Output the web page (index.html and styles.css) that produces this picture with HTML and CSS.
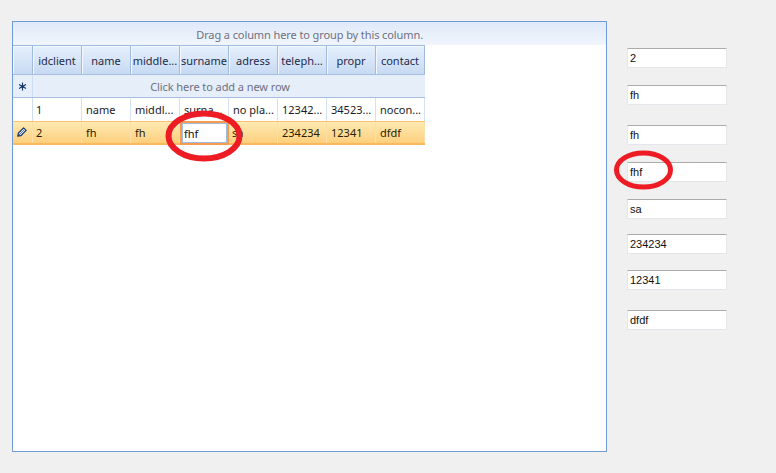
FILE: index.html
```html
<!DOCTYPE html>
<html lang="en">
<head>
<meta charset="utf-8">
<title>Clients</title>
<link rel="stylesheet" href="styles.css">
</head>
<body>
<main class="page">
  <section class="grid">
    <div class="group-panel">Drag a column here to group by this column.</div>
    <div class="row header">
      <div class="ind"></div>
      <div class="cell">idclient</div><div class="cell">name</div><div class="cell">middle...</div><div class="cell">surname</div>
      <div class="cell">adress</div><div class="cell">teleph...</div><div class="cell">propr</div><div class="cell">contact</div>
    </div>
    <div class="row new-row">
      <div class="ind">
        <svg class="icon" width="9" height="9" viewBox="0 0 9 9"><circle cx="4.5" cy="4.5" r="1.6" fill="#14366e"/><path d="M4.5 0.5v8M1 2.5l7 4M8 2.5l-7 4" stroke="#14366e" stroke-width="1.1" fill="none"/></svg>
      </div>
      <div class="new-text">Click here to add a new row</div>
    </div>
    <div class="row data">
      <div class="ind"></div>
      <div class="cell">1</div><div class="cell">name</div><div class="cell">middl...</div><div class="cell">surna...</div>
      <div class="cell">no pla...</div><div class="cell">12342...</div><div class="cell">34523...</div><div class="cell">nocon...</div>
    </div>
    <div class="row data focused">
      <div class="ind">
        <svg class="icon pencil" width="10" height="10" viewBox="0 0 10 10"><path d="M.8 9.2l.7-3.2L6.6.9l2.5 2.5L4 8.5z" fill="#eef4fc" stroke="#1a3a70" stroke-width="1.3" stroke-linejoin="round"/><path d="M2 8l5.5-5.5" stroke="#4f7fc0" stroke-width="1"/></svg>
      </div>
      <div class="cell">2</div><div class="cell">fh</div><div class="cell">fh</div><div class="cell editor"><span class="editor-box">fhf</span></div>
      <div class="cell sa">sa</div><div class="cell">234234</div><div class="cell">12341</div><div class="cell">dfdf</div>
    </div>
  </section>
  <aside class="fields">
    <div class="box gap-a">2</div>
    <div class="box gap-b">fh</div>
    <div class="box gap-c">fh</div>
    <div class="box gap-b">fhf</div>
    <div class="box gap-b">sa</div>
    <div class="box gap-e">234234</div>
    <div class="box gap-d">12341</div>
    <div class="box gap-c">dfdf</div>
  </aside>
  <svg class="mark mark-grid" width="78" height="52" viewBox="0 0 78 52"><ellipse cx="39" cy="26" rx="35.5" ry="22.5" fill="none" stroke="#ed1c24" stroke-width="6"/></svg>
  <svg class="mark mark-field" width="62" height="40" viewBox="0 0 62 40"><ellipse cx="30.5" cy="20" rx="27" ry="17" fill="none" stroke="#ed1c24" stroke-width="5"/></svg>
</main>
</body>
</html>
```
FILE: styles.css
```css
* { box-sizing: border-box; }
html, body { margin: 0; height: 100%; }
body { background: #f0f0f0; overflow: hidden; }
.page {
  position: relative;
  width: 776px;
  height: 473px;
  display: flex;
  align-items: flex-start;
  padding: 21px 0 0 12px;
  font: 11px "Noto Sans", "Liberation Sans", sans-serif;
}
.grid {
  width: 595px;
  height: 431px;
  background: #fff;
  border: 1px solid #6f9cd9;
  display: flex;
  flex-direction: column;
}
.group-panel {
  height: 23px;
  display: flex;
  align-items: center;
  justify-content: flex-end;
  padding-right: 183px;
  padding-top: 1px;
  letter-spacing: -0.1px;
  color: #6f7082;
  background: linear-gradient(#dfe9f8, #f1f6fd);
}
.row {
  display: grid;
  grid-template-columns: 20px repeat(8, 49px);
  width: 412px;
}
.ind { display: flex; align-items: center; justify-content: center; }
.cell {
  display: flex;
  align-items: center;
  padding-left: 4px;
  white-space: nowrap;
  overflow: hidden;
  color: #1b1b1f;
}
.header { height: 30px; border-top: 1px solid #9fbbdf; border-bottom: 1px solid #a7c0e2; }
.header .ind, .header .cell {
  background: linear-gradient(#e6f0fc, #c7daf3);
  border-right: 1px solid #a0bbdf;
  box-shadow: inset 1px 1px 0 #f3f8fe;
}
.header .cell { justify-content: center; padding: 0; color: #1e2a4a; }
.new-row {
  height: 23px;
  grid-template-columns: 20px 392px;
  border-bottom: 1px solid #a7c0e2;
}
.new-row .ind { background: #e6eef9; border-right: 1px solid #cfddf1; }
.new-text {
  display: flex;
  align-items: center;
  justify-content: center;
  padding-right: 18px;
  letter-spacing: -0.08px;
  background: #e6eef9;
  color: #6f7082;
}
.data { height: 23px; }
.data .ind { border-right: 1px solid #cfddf1; }
.data .cell { border-right: 1px solid #d5e2f4; }
.data .cell:nth-child(2) { padding-left: 3px; }
.focused {
  height: 24px;
  background: linear-gradient(#ffeab4, #fdcf7c);
  border-top: 1px solid #fbc370;
  border-bottom: 2px solid #f9b95c;
}
.focused .ind, .focused .cell { border-right-color: #fce0a8; }
.data.focused .cell { color: #2a1c00; }
.data.focused .cell.sa { padding-left: 3px; }
.data.focused .editor {
  margin: -1px 0 -2px;
  padding: 2px;
  overflow: visible;
  border-right: 0;
  background: #f89c4c;
}
.editor-box {
  flex: 1;
  align-self: stretch;
  display: flex;
  align-items: center;
  padding-left: 1px;
  background: #fff;
  border: 1px solid #a0bbdf;
  color: #111;
}
.icon { display: block; }
.pencil { margin-top: -1px; margin-right: 1px; }
.fields {
  margin-left: 20px;
  width: 100px;
  display: flex;
  flex-direction: column;
}
.box {
  height: 20px;
  background: #fff;
  border: 1px solid #e3e6ea;
  border-top-color: #ababab;
  border-radius: 1px;
  padding-left: 2px;
  display: flex;
  align-items: center;
  color: #101010;
  font-family: "Liberation Sans", sans-serif;
}
.gap-a { margin-top: 27px; }
.gap-b { margin-top: 17px; }
.gap-c { margin-top: 20px; }
.gap-d { margin-top: 16px; }
.gap-e { margin-top: 15px; }
.mark { position: absolute; display: block; }
.mark-grid { left: 165px; top: 110px; }
.mark-field { left: 613px; top: 150px; }
```
